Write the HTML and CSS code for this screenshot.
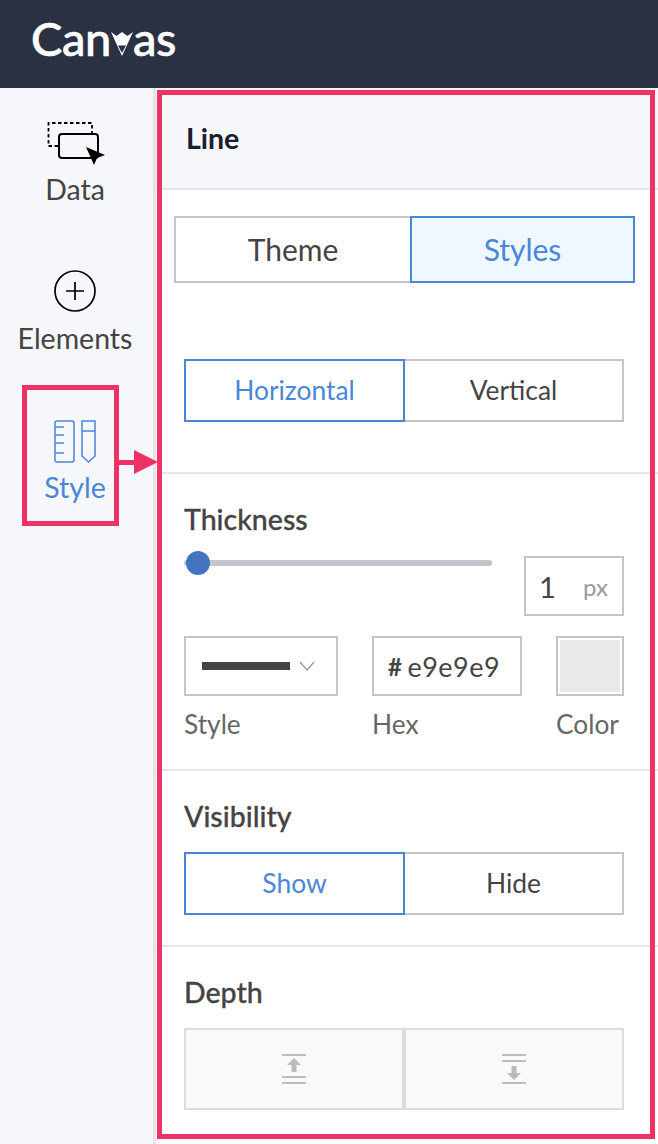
FILE: index.html
```html
<!DOCTYPE html>
<html lang="en">
<head>
    <meta charset="UTF-8">
    <meta name="viewport" content="width=device-width, initial-scale=1.0">
    <link rel="stylesheet" href="styles.css">
    <title>Canvas</title>
</head>
<body>
    <header class="topbar">
        <div class="logo">
            <span>Can</span>
            <svg class="logo-v" width="22" height="24" viewBox="0 0 22 24">
                <path d="M0 0 L5.500 4 L11 0 L16.500 4 L22 0 L11 24 Z" fill="#fff"/>
                <path d="M7 13.500 H15 L11 21 Z" fill="#2a3143"/>
            </svg>
            <span>as</span>
        </div>
    </header>

    <div class="main">
        <!-- Left menu -->
        <aside class="sidebar">
            <div class="side-item side-data">
                <svg width="60" height="44" viewBox="0 0 60 44" fill="none" stroke="#000">
                    <path d="M13 25 H3.500 V2 H47 V12" stroke-width="1.800" stroke-dasharray="3.500 2.500"/>
                    <rect x="14" y="13" width="39" height="24" rx="3" stroke-width="2"/>
                    <path d="M41 26 L60 34 L52 37 L49 44 Z" fill="#000" stroke="none"/>
                </svg>
                <span>Data</span>
            </div>
            <div class="side-item side-elements">
                <svg width="42" height="42" viewBox="0 0 42 42" fill="none" stroke="#000">
                    <circle cx="21" cy="21" r="20" stroke-width="1.700"/>
                    <path d="M21 12 V30 M12 21 H30" stroke-width="1.700"/>
                </svg>
                <span>Elements</span>
            </div>
            <div class="side-item side-style">
                <svg width="42" height="44" viewBox="0 0 42 44" fill="none" stroke="#4a86d8" stroke-width="1.500">
                    <rect x="1" y="1" width="19" height="41" rx="2"/>
                    <path d="M1 7 H10 M1 15 H10 M1 23 H10 M1 33 H10"/>
                    <path d="M28 1 H41 V36 L34.500 42 L28 36 Z"/>
                    <path d="M28 11 H41"/>
                </svg>
                <span>Style</span>
            </div>
        </aside>

        <!-- Properties panel -->
        <section class="panel">
            <div class="panel-title">Line</div>

            <div class="tabs">
                <div class="tab">Theme</div>
                <div class="tab active">Styles</div>
            </div>

            <div class="section section-align">
                <div class="toggle">
                    <div class="toggle-btn active">Horizontal</div>
                    <div class="toggle-btn">Vertical</div>
                </div>
            </div>

            <div class="section section-thick">
                <h3>Thickness</h3>
                <div class="thick-row">
                    <div class="slider"><span class="knob"></span></div>
                    <div class="px-box"><span class="px-val">1</span><span class="px-unit">px</span></div>
                </div>
                <div class="fields">
                    <div class="field field-style">
                        <div class="box select-box">
                            <span class="line-sample"></span>
                            <svg width="16" height="10" viewBox="0 0 16 10" fill="none" stroke="#999" stroke-width="1.300"><path d="M1 1 L8 9 L15 1"/></svg>
                        </div>
                        <label>Style</label>
                    </div>
                    <div class="field field-hex">
                        <div class="box hex-box"><span class="hash">#</span>e9e9e9</div>
                        <label>Hex</label>
                    </div>
                    <div class="field field-color">
                        <div class="box color-box"><span class="swatch"></span></div>
                        <label>Color</label>
                    </div>
                </div>
            </div>

            <div class="section section-vis">
                <h3>Visibility</h3>
                <div class="toggle">
                    <div class="toggle-btn active">Show</div>
                    <div class="toggle-btn">Hide</div>
                </div>
            </div>

            <div class="section section-depth">
                <h3>Depth</h3>
                <div class="depth-row">
                    <div class="depth-btn">
                        <svg width="24" height="30" viewBox="0 0 24 30" fill="#bbb">
                            <rect x="0" y="0" width="24" height="2"/>
                            <path d="M12 4 L19 11 H14.500 V18 H9.500 V11 H5 Z"/>
                            <rect x="0" y="22" width="24" height="2"/>
                            <rect x="0" y="28" width="24" height="2"/>
                        </svg>
                    </div>
                    <div class="depth-btn">
                        <svg width="24" height="30" viewBox="0 0 24 30" fill="#bbb">
                            <rect x="0" y="0" width="24" height="2"/>
                            <rect x="0" y="6" width="24" height="2"/>
                            <path d="M12 26 L19 19 H14.500 V12 H9.500 V19 H5 Z"/>
                            <rect x="0" y="28" width="24" height="2"/>
                        </svg>
                    </div>
                </div>
            </div>
        </section>

        <!-- Annotation overlays -->
        <div class="mark mark-panel"></div>
        <div class="mark mark-style"></div>
        <div class="mark-arrow"></div>
    </div>
</body>
</html>
```

FILE: styles.css
```css
* {
    box-sizing: border-box;
}

body {
    margin: 0;
    font-family: 'Lato', sans-serif;
    color: #444;
    background-color: #fff;
    width: 658px;
    height: 1144px;
    overflow: hidden;
}

.topbar {
    height: 88px;
    background-color: #2a3143;
    padding: 12px 0 0 31px;
}

.logo {
    display: flex;
    align-items: flex-start;
    color: #fff;
    font-family: 'Lato Medium', 'Lato', sans-serif;
    font-size: 47px;
    line-height: 52px;
    letter-spacing: -0.4px;
    -webkit-text-stroke: 0.6px #fff;
}

.logo-v {
    margin: 20px 0 0 0;
}

.main {
    position: relative;
    display: flex;
    height: 1056px;
}

/* Left menu */
.sidebar {
    width: 156px;
    background-color: #f5f7fb;
    border-right: 3px solid #e4e5e8;
    display: flex;
    flex-direction: column;
    align-items: center;
    padding-right: 3px;
    font-size: 28.5px;
    color: #444;
}

.side-item {
    display: flex;
    flex-direction: column;
    align-items: center;
}

.side-data {
    margin-top: 33px;
    gap: 7px;
}

.side-elements {
    margin-top: 64px;
    gap: 9px;
}

.side-style {
    margin-top: 65px;
    gap: 6px;
    color: #4a86d8;
}

.side-item span {
    line-height: 34px;
}

/* Properties panel */
.panel {
    flex: 1;
}

.panel-title {
    height: 102px;
    background-color: #f5f7fb;
    border-bottom: 2px solid #e6e7ea;
    padding: 33px 0 0 30px;
    font-size: 28.5px;
    line-height: 34px;
    font-weight: 700;
    color: #1b2030;
}

.tabs {
    display: flex;
    margin: 26px 0 0 18px;
    width: 461px;
    height: 67px;
    font-size: 30px;
}

.tab {
    width: 236px;
    border: 2px solid #c4c4ca;
    border-right: none;
    display: flex;
    align-items: center;
    justify-content: center;
    padding-bottom: 2px;
}

.tab.active {
    width: 225px;
    border: 2px solid #4a86d8;
    background-color: #f0f8ff;
    color: #4a86d8;
}

.section {
    padding-left: 28px;
    border-bottom: 2px solid #e6e7ea;
}

h3 {
    margin: 0;
    font-family: 'Lato Medium', 'Lato', sans-serif;
    font-size: 28.5px;
    line-height: 34px;
    font-weight: 400;
    color: #444;
    -webkit-text-stroke: 0.3px #444;
}

.toggle {
    display: flex;
    width: 440px;
    height: 63px;
    font-size: 26.4px;
}

.toggle-btn {
    flex: 1;
    border: 2px solid #c4c4ca;
    border-left: none;
    display: flex;
    align-items: center;
    justify-content: center;
    padding-bottom: 1px;
}

.toggle-btn.active {
    border: 2px solid #4a86d8;
    color: #4a86d8;
}

.section-align {
    margin-top: 76px;
    height: 115px;
}

.section-thick {
    height: 297px;
    padding-top: 28px;
}

.thick-row {
    display: flex;
    justify-content: space-between;
    width: 440px;
    height: 100px;
    padding-top: 17px;
}

.slider {
    position: relative;
    width: 308px;
    height: 6px;
    margin-top: 7px;
    border-radius: 3px;
    background-color: #c4c4ca;
}

.knob {
    position: absolute;
    left: 2px;
    top: -9px;
    width: 24px;
    height: 24px;
    border-radius: 50%;
    background-color: #4274bf;
}

.px-box {
    width: 100px;
    height: 60px;
    margin-top: 3px;
    border: 2px solid #c4c4ca;
    display: flex;
    align-items: center;
    justify-content: space-between;
    padding: 0 14px 0 13px;
}

.px-val {
    font-size: 29px;
}

.px-unit {
    font-size: 24px;
    color: #999;
}

.fields {
    display: flex;
    width: 440px;
    justify-content: space-between;
}

.box {
    height: 60px;
    border: 2px solid #c4c4ca;
    display: flex;
    align-items: center;
}

.field label {
    display: block;
    margin-top: 12px;
    font-size: 26.3px;
    line-height: 32px;
    color: #666;
}

.select-box {
    width: 154px;
    padding-left: 16px;
}

.line-sample {
    width: 88px;
    height: 8px;
    background-color: #444;
    margin-right: 9px;
}

.hex-box {
    width: 150px;
    padding-left: 14px;
    font-size: 27px;
    letter-spacing: 0.5px;
}

.hash {
    font-size: 24px;
    font-weight: 700;
    margin-right: 5px;
}

.color-box {
    width: 68px;
    padding: 2px;
}

.swatch {
    display: block;
    width: 100%;
    height: 100%;
    background-color: #e9e9e9;
}

.section-vis {
    height: 176px;
    padding-top: 28px;
}

.section-vis h3 {
    margin-bottom: 19px;
}

.section-depth {
    border-bottom: none;
    padding-top: 28px;
}

.section-depth h3 {
    margin-bottom: 19px;
}

.depth-row {
    display: flex;
    width: 440px;
    height: 82px;
}

.depth-btn {
    flex: 1;
    border: 2px solid #dcdce0;
    background-color: #f9f9fb;
    display: flex;
    align-items: center;
    justify-content: center;
}

/* Annotation overlays */
.mark {
    position: absolute;
    border: 5px solid #ee3364;
}

.mark-panel {
    left: 157px;
    top: 2px;
    width: 498px;
    height: 1049px;
}

.mark-style {
    left: 22px;
    top: 297px;
    width: 97px;
    height: 141px;
}

.mark-arrow {
    position: absolute;
    left: 118px;
    top: 372px;
    width: 20px;
    height: 5px;
    background-color: #ee3364;
}

.mark-arrow::after {
    content: "";
    position: absolute;
    left: 16px;
    top: -10px;
    border-left: 24px solid #ee3364;
    border-top: 12.5px solid transparent;
    border-bottom: 12.5px solid transparent;
}
```
